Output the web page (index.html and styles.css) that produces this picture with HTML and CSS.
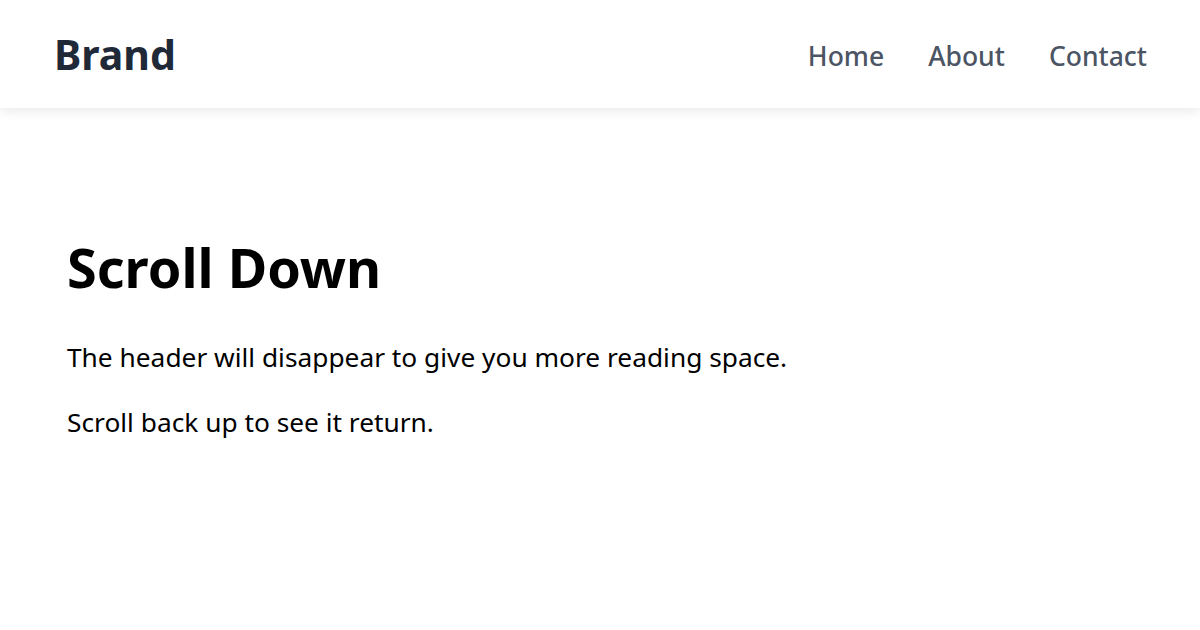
FILE: index.html
```html
<!DOCTYPE html>
<html lang="en">
<head>
<meta charset="utf-8">
<title>Scroll Down</title>
<link rel="stylesheet" href="styles.css">
</head>
<body>
<header class="site-header">
  <div class="brand">Brand</div>
  <nav class="nav">
    <a href="#" class="nav-link">Home</a>
    <a href="#" class="nav-link">About</a>
    <a href="#" class="nav-link">Contact</a>
  </nav>
</header>
<main class="content">
  <h1 class="title">Scroll Down</h1>
  <p class="text">The header will disappear to give you more reading space.</p>
  <p class="text">Scroll back up to see it return.</p>
</main>
</body>
</html>
```
FILE: styles.css
```css
* { box-sizing: border-box; }
html, body { margin: 0; padding: 0; }
body {
  font-family: "Noto Sans", "Open Sans", sans-serif;
  background: #fff;
  color: #000;
  width: 1200px;
  height: 630px;
  overflow: hidden;
}
.site-header {
  height: 108px;
  display: flex;
  align-items: center;
  justify-content: space-between;
  padding: 0 53px 0 54px;
  background: #fff;
  box-shadow: 0 2px 12px rgba(0, 0, 0, 0.1);
  position: relative;
}
.brand {
  font-size: 41px;
  font-weight: 700;
  color: #1f2937;
}
.nav {
  display: flex;
  gap: 44px;
  padding-top: 3px;
}
.nav-link {
  font-size: 26.5px;
  font-weight: 500;
  color: #4b5563;
  text-decoration: none;
}
.content {
  padding: 127px 67px 0;
}
.title {
  margin: 0 0 36px;
  font-size: 54px;
  font-weight: 700;
  line-height: 1.2;
}
.text {
  margin: 0 0 23px;
  font-size: 26.3px;
  line-height: 1.6;
}
```
